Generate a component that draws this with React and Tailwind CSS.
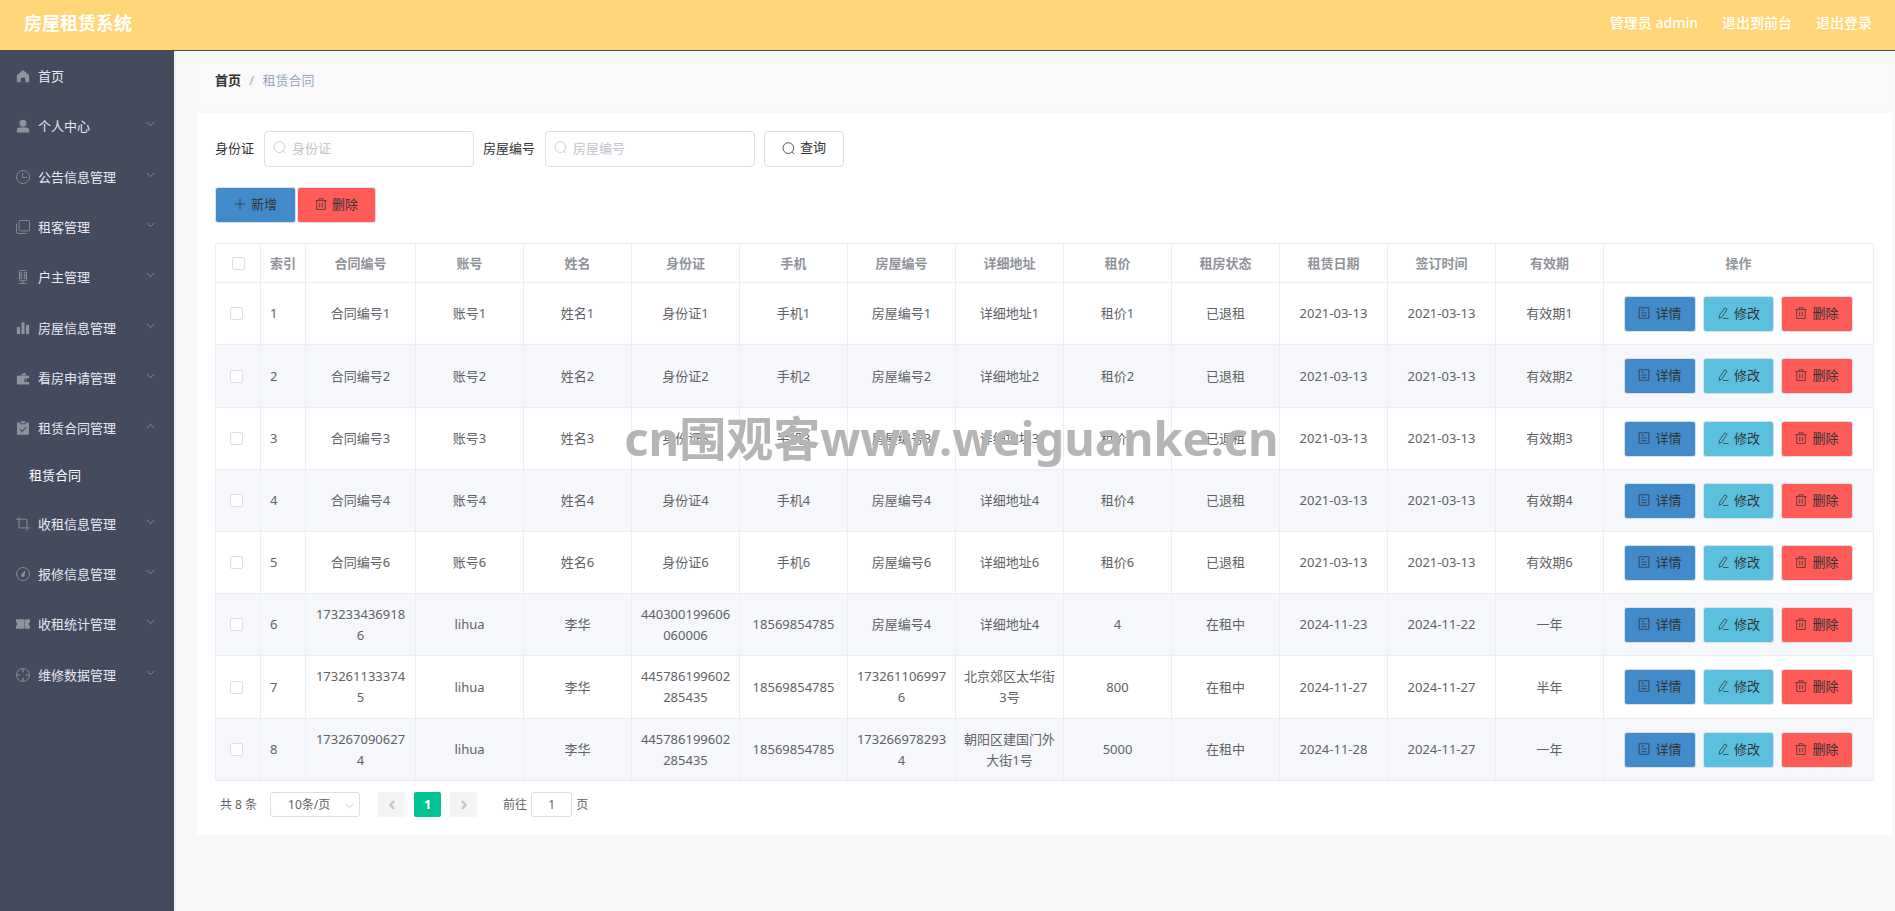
import { useState } from "react";
import clsx from "clsx";

function Icon({ className, children }) {
  return (
    <svg
      viewBox="0 0 16 16"
      fill="none"
      stroke="currentColor"
      strokeWidth="1"
      className={clsx("shrink-0", className)}
      aria-hidden="true"
    >
      {children}
    </svg>
  );
}

const icons = {
  home: <path fill="currentColor" stroke="none" d="M8 1.2 15 7v8h-4.5v-4a1 1 0 0 0-1-1h-3a1 1 0 0 0-1 1v4H1V7z" />,
  user: (
    <g fill="currentColor" stroke="none">
      <circle cx="8" cy="4.8" r="4" />
      <path d="M1 15.5v-2.6A3.2 3.2 0 0 1 4.2 9.8h7.6a3.2 3.2 0 0 1 3.2 3.1v2.6z" />
    </g>
  ),
  clock: (
    <>
      <circle cx="8" cy="8" r="7.4" />
      <path d="M7.5 3.5v5h5" />
    </>
  ),
  copy: (
    <>
      <rect x="3.5" y="0.5" width="12" height="12" rx="1.8" />
      <path d="M.5 4v9.7a1.8 1.8 0 0 0 1.8 1.8h9.9" />
    </>
  ),
  mic: (
    <>
      <rect x="4" y=".6" width="8" height="11.6" rx="1" />
      <path d="M6.5 2.5v8M9.5 2.5v8M4 3.5h2M4 6.3h2M4 9.1h2M10 3.5h2M10 6.3h2M10 9.1h2M8 12.5v3M3.5 15.5h9" />
    </>
  ),
  chart: (
    <g fill="currentColor" stroke="none">
      <rect x="1" y="7" width="3.6" height="8" />
      <rect x="6.2" y="1.5" width="3.6" height="13.5" />
      <rect x="11.4" y="4.5" width="3.6" height="10.5" />
    </g>
  ),
  wallet: (
    <g fill="currentColor" stroke="none">
      <path d="M1 5.5h14v3.2h-3.8a1.9 1.9 0 0 0 0 3.8H15V15.5H1z" />
      <path d="M4.5 5 10 1.8 12 5z" />
      <circle cx="11.6" cy="10.6" r=".9" />
    </g>
  ),
  claim: (
    <>
      <path fill="currentColor" stroke="none" d="M5.5.3h5v2.4h-5z" />
      <path fill="currentColor" stroke="none" d="M1.2 1.6h3.3v2.2h7V1.6h3.3v14H1.2z" />
      <path stroke="#444b5d" strokeWidth="1.3" d="m4.4 9.3 2.6 2.5 4.6-4.8" />
    </>
  ),
  crop: <path d="M3.5 0v12.5H16M0 2.5h12.5V16" />,
  odometer: (
    <>
      <circle cx="8" cy="8" r="7.4" />
      <path fill="currentColor" stroke="none" d="m10.8 3.8-1 5.4a2 2 0 1 1-2.9-1.6z" />
    </>
  ),
  ticket: (
    <path
      fill="currentColor"
      stroke="none"
      d="M0 2.5h9.2v1.4h1V2.5H16v3.4a2.2 2.2 0 0 0 0 4.2v3.4h-5.8v-1.4h-1v1.4H0v-3.4a2.2 2.2 0 0 0 0-4.2zm9.2 3.2v1.6h1V5.7zm0 3.2v1.6h1V8.9z"
    />
  ),
  aim: (
    <>
      <circle cx="8" cy="8" r="7.4" />
      <path d="M8 1v4M8 11v4M1 8h4M11 8h4" strokeWidth="1.3" />
    </>
  ),
  search: (
    <>
      <circle cx="7.8" cy="7.5" r="6.6" />
      <path d="m12.4 12.2 2.4 2.6" />
    </>
  ),
  plus: <path d="M8 1v14M1 8h14" />,
  trash: <path d="M.5 3.5h15M5.3 3.3V1h5.4v2.3M2.3 3.5v11.9h11.4V3.5M6.3 6.5v6M9.7 6.5v6" />,
  doc: <path d="M1.5 1h13v14h-13zM4.5 4.5h3.5M4.5 8h7M4.5 11.5h7" />,
  edit: <path d="M10.3 1.2 13.4 3 6.6 13.5 2.8 15l.6-3.9zM8 15.3h7.5" />,
};

const menu = [
  { label: "首页", icon: "home" },
  { label: "个人中心", icon: "user", sub: true },
  { label: "公告信息管理", icon: "clock", sub: true },
  { label: "租客管理", icon: "copy", sub: true },
  { label: "户主管理", icon: "mic", sub: true },
  { label: "房屋信息管理", icon: "chart", sub: true },
  { label: "看房申请管理", icon: "wallet", sub: true },
  { label: "租赁合同管理", icon: "claim", sub: true, children: ["租赁合同"] },
  { label: "收租信息管理", icon: "crop", sub: true },
  { label: "报修信息管理", icon: "odometer", sub: true },
  { label: "收租统计管理", icon: "ticket", sub: true },
  { label: "维修数据管理", icon: "aim", sub: true },
];

const columns = [
  "合同编号", "账号", "姓名", "身份证", "手机", "房屋编号",
  "详细地址", "租价", "租房状态", "租赁日期", "签订时间", "有效期",
];

const demoRow = (n) => [
  `合同编号${n}`, `账号${n}`, `姓名${n}`, `身份证${n}`, `手机${n}`, `房屋编号${n}`,
  `详细地址${n}`, `租价${n}`, "已退租", "2021-03-13", "2021-03-13", `有效期${n}`,
];

const rows = [
  demoRow(1),
  demoRow(2),
  demoRow(3),
  demoRow(4),
  demoRow(6),
  ["1732334369186", "lihua", "李华", "440300199606060006", "18569854785", "房屋编号4", "详细地址4", "4", "在租中", "2024-11-23", "2024-11-22", "一年"],
  ["1732611333745", "lihua", "李华", "445786199602285435", "18569854785", "1732611069976", "北京郊区太华街3号", "800", "在租中", "2024-11-27", "2024-11-27", "半年"],
  ["1732670906274", "lihua", "李华", "445786199602285435", "18569854785", "1732669782934", "朝阳区建国门外大街1号", "5000", "在租中", "2024-11-28", "2024-11-27", "一年"],
];

function Chevron({ className }) {
  return (
    <svg viewBox="0 0 10 6" fill="none" stroke="currentColor" className={className} aria-hidden="true">
      <path d="m1 .8 4 4 4-4" />
    </svg>
  );
}

function Header() {
  return (
    <header className="flex h-[51px] items-center justify-between border-b border-[#4a4a4a] bg-[#ffd678] pr-[23px] pb-1 pl-6 text-white">
      <h1 className="text-[18px] leading-6 font-bold">房屋租赁系统</h1>
      <nav className="flex gap-6 text-[14px] leading-5 font-medium">
        <span>管理员 admin</span>
        <a href="#front">退出到前台</a>
        <a href="#logout">退出登录</a>
      </nav>
    </header>
  );
}

function Sidebar() {
  return (
    <aside className="w-[174px] shrink-0 bg-[#444b5d]">
      <ul>
        {menu.map((item) => (
          <li key={item.label} className="nth-[3n+2]:pb-px">
            <a
              href="#menu"
              className="flex h-[50px] items-center pr-[19px] pl-4 text-[13px] leading-5 text-[#e6e9f0]"
            >
              <Icon className="mr-2 size-[14px] text-[#909399]">{icons[item.icon]}</Icon>
              <span className="flex-1">{item.label}</span>
              {item.sub && (
                <Chevron className={clsx("mb-1 h-[6px] w-[9px] text-[#909399]", item.children && "rotate-180")} />
              )}
            </a>
            {item.children?.map((child) => (
              <a
                key={child}
                href="#contract"
                className="flex h-[45px] items-center pb-0.5 pl-[29px] text-[13px] leading-5 text-white"
              >
                {child}
              </a>
            ))}
          </li>
        ))}
      </ul>
    </aside>
  );
}

function SearchField({ id, label }) {
  return (
    <div className="flex items-center gap-[10px]">
      <label htmlFor={id} className="text-[13px] text-[#303133]">{label}</label>
      <div className="relative">
        <Icon className="absolute top-[10px] left-[9px] size-[13px] text-[#c0c4cc]">{icons.search}</Icon>
        <input
          id={id}
          type="text"
          placeholder={label}
          className="h-9 w-[210px] rounded border border-[#dcdfe6] bg-white pr-3 pb-0.5 pl-[27px] text-[13px] outline-none placeholder:text-[#c0c4cc]"
        />
      </div>
    </div>
  );
}

function ActionButton({ icon, className, children }) {
  return (
    <button
      type="button"
      className={clsx(
        "flex h-9 items-center justify-center gap-[5px] rounded-[3px] border border-[#dcdfe6] pb-0.5 text-[13px] leading-5 text-[#333]",
        className
      )}
    >
      <Icon className="size-[12px]">{icons[icon]}</Icon>
      {children}
    </button>
  );
}

const boxClass = "block size-[13px] appearance-none rounded-[2px] border border-[#dcdfe6] bg-white checked:bg-[#00c292]";
const thClass = "h-[39px] border-r border-b border-[#ebeef5] text-center font-semibold text-[#909399]";
const tdClass = "border-r border-b border-[#ebeef5]";

function ContractTable() {
  const [selected, setSelected] = useState([]);

  const toggle = (i) => {
    setSelected(selected.includes(i) ? selected.filter((s) => s !== i) : [...selected, i]);
  };

  return (
    <table className="w-full table-fixed border-separate border-spacing-0 border-t border-l border-[#ebeef5] text-[13px] leading-[21px] text-[#606266]">
      <colgroup>
        <col className="w-[45px]" />
        <col className="w-[45px]" />
        <col className="w-[110px]" />
        {columns.slice(1).map((c) => (
          <col key={c} />
        ))}
        <col className="w-[270px]" />
      </colgroup>
      <thead>
        <tr>
          <th className={thClass}>
            <input
              type="checkbox"
              aria-label="全选"
              checked={selected.length === rows.length}
              onChange={(e) => setSelected(e.target.checked ? rows.map((_, i) => i) : [])}
              className={clsx(boxClass, "mx-auto")}
            />
          </th>
          <th className={thClass}>索引</th>
          {columns.map((c) => (
            <th key={c} className={thClass}>{c}</th>
          ))}
          <th className={thClass}>操作</th>
        </tr>
      </thead>
      <tbody>
        {rows.map((row, i) => (
          <tr key={i} className="h-[62px] even:bg-[#f5f7fa] nth-[5n+2]:h-[63px]">
            <td className={clsx(tdClass, "pl-[14px]")}>
              <input
                type="checkbox"
                aria-label={`选择第${i + 1}行`}
                checked={selected.includes(i)}
                onChange={() => toggle(i)}
                className={boxClass}
              />
            </td>
            <td className={clsx(tdClass, "pl-[9px]")}>{i + 1}</td>
            {row.map((cell, j) => (
              <td key={j} className={clsx(tdClass, "px-[7px] text-center break-all")}>{cell}</td>
            ))}
            <td className={tdClass}>
              <div className="flex justify-center gap-[7px]">
                <ActionButton icon="doc" className="w-[72px] bg-[#428bca]">详情</ActionButton>
                <ActionButton icon="edit" className="w-[71px] bg-[#5bc0de]">修改</ActionButton>
                <ActionButton icon="trash" className="w-[72px] bg-[#ff5b57]">删除</ActionButton>
              </div>
            </td>
          </tr>
        ))}
      </tbody>
    </table>
  );
}

function Pagination() {
  return (
    <div className="mt-[11px] flex h-[25px] items-center pl-[5px] text-[12px] text-[#606266]">
      <span className="mr-[13px]">共 8 条</span>
      <div className="relative mr-[18px]">
        <select
          aria-label="每页条数"
          className="h-[25px] w-[90px] appearance-none rounded-[3px] border border-[#dcdfe6] bg-white pl-[17px] outline-none"
        >
          <option>10条/页</option>
          <option>20条/页</option>
          <option>50条/页</option>
        </select>
        <Chevron className="pointer-events-none absolute top-[11px] right-[6px] h-[6px] w-[9px] text-[#c0c4cc]" />
      </div>
      <div className="flex gap-[9px]">
        <button type="button" aria-label="上一页" className="flex h-[25px] w-[27px] items-center justify-center rounded-[2px] bg-[#f4f4f5]" disabled>
          <Chevron className="h-[6px] w-[10px] rotate-90 stroke-2 text-[#c0c4cc]" />
        </button>
        <button type="button" className="h-[25px] w-[27px] rounded-[2px] bg-[#00c292] font-bold text-white">1</button>
        <button type="button" aria-label="下一页" className="flex h-[25px] w-[27px] items-center justify-center rounded-[2px] bg-[#f4f4f5]" disabled>
          <Chevron className="h-[6px] w-[10px] -rotate-90 stroke-2 text-[#c0c4cc]" />
        </button>
      </div>
      <label htmlFor="page" className="mr-1 ml-[26px]">前往</label>
      <input
        id="page"
        type="text"
        defaultValue="1"
        className="mr-1 h-[25px] w-[41px] rounded-[3px] border border-[#dcdfe6] bg-white text-center outline-none"
      />
      <span>页</span>
    </div>
  );
}

function App() {
  return (
    <div className="flex min-h-screen flex-col bg-[#f7f8fa] font-['Noto_Sans','Noto_Sans_CJK_SC',sans-serif]">
      <Header />
      <div className="flex flex-1">
        <Sidebar />
        <main className="min-w-0 flex-1 border-l-2 border-[#f5f2f5] pt-[6px] pr-[3px] pl-[21px]">
          <nav className="mb-2 flex h-12 items-center gap-2 bg-[#f9f9f9] px-[18px] pb-0.5 text-[13px] leading-5">
            <a href="#home" className="font-bold text-[#303133]">首页</a>
            <span className="font-bold text-[#c0c4cc]">/</span>
            <span className="text-[#97a8be]">租赁合同</span>
          </nav>
          <section className="bg-white p-[18px]">
            <form className="flex items-center gap-[9px]" onSubmit={(e) => e.preventDefault()}>
              <SearchField id="idcard" label="身份证" />
              <SearchField id="house" label="房屋编号" />
              <button
                type="submit"
                className="flex h-9 w-20 items-center justify-center gap-[5px] rounded border border-[#dcdfe6] bg-white pb-0.5 text-[13px] text-[#333]"
              >
                <Icon className="size-[13px]">{icons.search}</Icon>
                查询
              </button>
            </form>
            <div className="mt-[20px] mb-[20px] flex gap-px">
              <ActionButton icon="plus" className="w-[81px] bg-[#428bca]">新增</ActionButton>
              <ActionButton icon="trash" className="w-[79px] bg-[#ff5b57]">删除</ActionButton>
            </div>
            <ContractTable />
            <Pagination />
          </section>
        </main>
      </div>
      <div className="pointer-events-none fixed inset-x-0 top-[408px] pl-2 text-center text-[47px] leading-[60px] font-bold text-[#b5b5b5]">
        cn围观客www.weiguanke.cn
      </div>
    </div>
  );
}

export default App;
